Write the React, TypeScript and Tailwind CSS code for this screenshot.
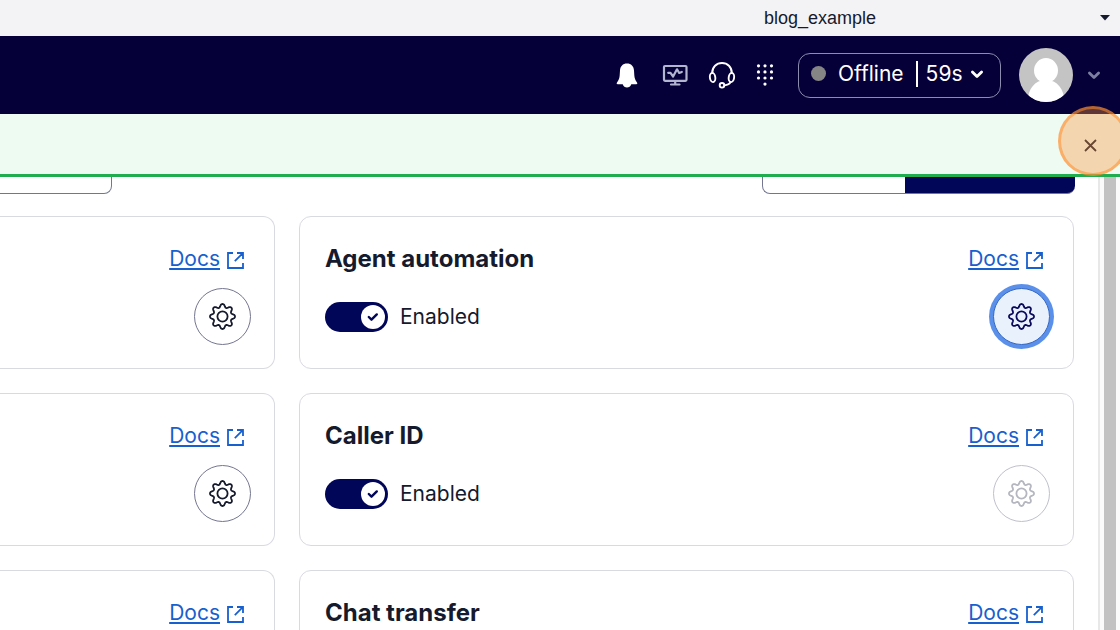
import type { ReactNode } from "react";

type GearState = "default" | "focused" | "disabled";

type Feature = {
  name: string;
  gear?: GearState;
};

const features: Feature[] = [
  { name: "Agent automation", gear: "focused" },
  { name: "Caller ID", gear: "disabled" },
  { name: "Chat transfer" },
];

const gearStyles: Record<GearState, string> = {
  default: "border-[#747690] bg-white text-[#151a2d]",
  focused: "border-[#3568c4] bg-[#e9f1fd] text-[#0a0a5c] ring-4 ring-[#5a90ea]",
  disabled: "border-[#bfc0cc] bg-white text-[#b4b6c0]",
};

function BellIcon() {
  return (
    <svg width="22" height="25" viewBox="0 0 22 25" fill="currentColor" aria-hidden="true">
      <path d="M11 .5C6.800.5 4.300 3.200 4 7.500l-.3 4.800c-.2 2.900-.9 4.800-2.700 7.200-.7 1-.3 1.700.7 1.700h5C7.500 23.300 9 24.500 11 24.500s3.500-1.200 4.300-3.300h5c1 0 1.400-.7.7-1.700-1.800-2.400-2.500-4.300-2.700-7.200L18 7.500C17.700 3.200 15.200.5 11 .5Z" />
    </svg>
  );
}

function MonitorIcon() {
  return (
    <svg width="26" height="24" viewBox="0 0 26 24" fill="none" stroke="currentColor" strokeWidth="2.200" strokeLinejoin="round" strokeLinecap="round" aria-hidden="true">
      <rect x="2" y="3" width="22.500" height="14.800" rx="1" />
      <path d="M13.200 18v3M9 21.500h8.500" />
      <path d="M6.200 9.800h2.300l2.600 3.700L15 6.300l2.200 3.700 2.600-1" />
    </svg>
  );
}

function HeadsetIcon() {
  return (
    <svg width="28" height="28" viewBox="0 0 28 28" fill="none" stroke="currentColor" strokeWidth="1.900" strokeLinecap="round" aria-hidden="true">
      <path d="M4.200 12C4.200 6 8.500 2 14 2s9.800 4 9.800 10" />
      <ellipse cx="4.600" cy="16.500" rx="2.700" ry="4.600" transform="rotate(-8 4.600 16.500)" />
      <ellipse cx="23.400" cy="16.500" rx="2.700" ry="4.600" transform="rotate(8 23.400 16.500)" />
      <path d="M22.500 21.200c-.8 1.800-2.900 2.900-6.100 3.200" />
      <circle cx="14" cy="24.300" r="2.300" />
    </svg>
  );
}

function DialpadIcon() {
  return (
    <svg width="18" height="24" viewBox="0 0 18 24" fill="currentColor" aria-hidden="true">
      {[2.8, 8.9, 15].map((y) =>
        [2.5, 9, 15.5].map((x) => <circle key={`${x}-${y}`} cx={x} cy={y} r="1.600" />)
      )}
      <circle cx="9" cy="21.100" r="1.600" />
    </svg>
  );
}

function ChevronIcon() {
  return (
    <svg width="14" height="10" viewBox="0 0 14 10" fill="none" stroke="currentColor" strokeWidth="2.800" strokeLinecap="round" strokeLinejoin="round" aria-hidden="true">
      <path d="M2.400 2.900 7 7.500l4.600-4.600" />
    </svg>
  );
}

function ExternalIcon() {
  return (
    <svg width="17" height="17" viewBox="0 0 17 17" fill="none" stroke="currentColor" strokeWidth="1.800" className="mt-0.5" aria-hidden="true">
      <path d="M6 1H1v15h15v-5M10 1h6v6M15.800 1.200 7.800 9.200" />
    </svg>
  );
}

function GearIcon() {
  // eight rounded teeth, one every 45 degrees
  const points = Array.from({ length: 160 }, (_, i) => {
    const a = (i / 160) * Math.PI * 2;
    const c = Math.cos(8 * a);
    const r = 10.9 + 1.6 * (1.25 * c - 0.25 * c * c * c);
    return `${(13.5 + r * Math.cos(a)).toFixed(2)} ${(13.5 + r * Math.sin(a)).toFixed(2)}`;
  });
  return (
    <svg width="27" height="27" viewBox="0 0 27 27" fill="none" stroke="currentColor" strokeWidth="1.800" strokeLinejoin="round" aria-hidden="true">
      <path d={`M${points.join("L")}Z`} />
      <circle cx="13.500" cy="13.500" r="5.100" />
    </svg>
  );
}

function DocsLink() {
  return (
    <a href="#docs" className="mr-[7px] flex items-center gap-[7px] text-[21px] leading-9 text-[#1760ce]">
      <span className="underline decoration-2 underline-offset-2">Docs</span>
      <ExternalIcon />
    </a>
  );
}

function GearButton({ label, state = "default" }: { label: string; state?: GearState }) {
  return (
    <button
      type="button"
      aria-label={label}
      disabled={state === "disabled"}
      className={`flex size-[57px] items-center justify-center rounded-full border ${gearStyles[state]}`}
    >
      <GearIcon />
    </button>
  );
}

function Toggle({ name }: { name: string }) {
  return (
    <label className="relative flex items-center gap-3 text-[21px] text-[#151a2d]">
      <input type="checkbox" role="switch" defaultChecked aria-label={`${name} enabled`} className="sr-only" />
      <span className="flex h-[30px] w-[63px] items-center justify-end rounded-full bg-[#020659] pr-[3px]">
        <span className="flex size-6 items-center justify-center rounded-full bg-white text-[#020659]">
          <svg width="12" height="10" viewBox="0 0 12 10" fill="none" stroke="currentColor" strokeWidth="2.400" strokeLinecap="round" strokeLinejoin="round" aria-hidden="true">
            <path d="m1.800 5 2.700 2.700 5.300-5.300" />
          </svg>
        </span>
      </span>
      Enabled
    </label>
  );
}

function Card({ className, children }: { className: string; children: ReactNode }) {
  return (
    <section className={`min-h-[153px] border border-[#d9dae1] bg-white pt-6 pb-[23px] pr-[23px] ${className}`}>
      {children}
    </section>
  );
}

export default function App() {
  return (
    <div className="flex h-screen flex-col overflow-hidden bg-white font-[Inter,sans-serif]">
      <div className="flex h-9 shrink-0 items-center justify-end bg-[#f3f3f6] pr-[10px] text-[#151a2d]">
        <button type="button" className="flex items-center gap-56 font-['Liberation_Sans',Arial,sans-serif] text-[18px]">
          blog_example
          <svg width="10" height="6" viewBox="0 0 10 6" fill="currentColor" aria-hidden="true">
            <path d="M0 0h10L5 5.500Z" />
          </svg>
        </button>
      </div>

      <header className="flex h-[78px] shrink-0 items-center justify-end bg-[#050038] pr-[19px] text-white">
        <nav className="mr-6 flex items-center gap-5" aria-label="Tools">
          <button type="button" aria-label="Notifications" className="mr-1">
            <BellIcon />
          </button>
          <button type="button" aria-label="Monitoring" className="text-[#b3b6d0]">
            <MonitorIcon />
          </button>
          <button type="button" aria-label="Support">
            <HeadsetIcon />
          </button>
          <button type="button" aria-label="Dialpad">
            <DialpadIcon />
          </button>
        </nav>
        <button type="button" className="flex h-[45px] w-[203px] items-center rounded-xl border border-[#8b8caf] pb-[3px] pl-3 text-[21px]">
          <span className="mr-3 size-[15px] rounded-full bg-[#858585]" />
          Offline
          <span className="mr-2 ml-3 h-[26px] w-[2px] bg-white" />
          <span className="mr-2">59s</span>
          <ChevronIcon />
        </button>
        <button type="button" aria-label="Account" className="ml-[18px] flex items-center gap-[14px] text-[#7d7f9f]">
          <svg width="54" height="54" viewBox="0 0 54 54" aria-hidden="true">
            <clipPath id="avatar">
              <circle cx="27" cy="27" r="27" />
            </clipPath>
            <g clipPath="url(#avatar)">
              <rect width="54" height="54" fill="#c4c4c4" />
              <ellipse cx="27" cy="22.500" rx="12" ry="12.500" fill="#fff" />
              <path d="M8.500 54c.5-13 7-22 18.500-22s18 9 18.500 22Z" fill="#fff" />
            </g>
          </svg>
          <ChevronIcon />
        </button>
      </header>

      <div role="status" className="relative z-10 flex h-[63px] shrink-0 items-center justify-end border-b-3 border-[#1fad50] bg-[#edfbf2] pt-0.5 pr-[23px]">
        <button type="button" aria-label="Close" className="text-[#151a2d]">
          <svg width="13" height="13" viewBox="0 0 13 13" fill="none" stroke="currentColor" strokeWidth="1.800" aria-hidden="true">
            <path d="m1 1 11 11M12 1 1 12" />
          </svg>
        </button>
        <span className="pointer-events-none absolute -top-2 -right-2 size-[70px] rounded-full border-3 border-[#ff8c2c]/55 bg-[#ff973a]/36" />
      </div>

      <main className="flex min-h-0 flex-1">
        <div className="min-w-0 flex-1 overflow-hidden pr-6">
          <div className="-mr-px flex h-[17px] items-end justify-between overflow-hidden">
            <input type="search" aria-label="Search features" className="h-12 w-28 rounded-r-lg border border-l-0 border-[#747690]" />
            <div className="flex">
              <button type="button" aria-label="List view" className="h-12 w-[143px] rounded-l-lg border border-r-0 border-[#747690]" />
              <button type="button" aria-label="Grid view" className="h-12 w-[170px] rounded-r-lg border-b border-[#747690] bg-[#020659]" />
            </div>
          </div>

          <div className="mt-[22px] flex flex-col gap-6">
            {features.map((feature) => (
              <div key={feature.name} className="grid grid-cols-[275px_1fr] gap-6">
                <Card className="rounded-r-xl border-l-0">
                  <div className="flex justify-end">
                    <DocsLink />
                  </div>
                  {feature.gear && (
                    <div className="mt-[11px] flex justify-end">
                      <GearButton label="Settings" />
                    </div>
                  )}
                </Card>
                <Card className="rounded-xl pl-[25px]">
                  <div className="flex items-center justify-between">
                    <h2 className="text-[24px] leading-9 font-bold text-[#151a2d]">{feature.name}</h2>
                    <DocsLink />
                  </div>
                  {feature.gear && (
                    <div className="mt-[11px] flex items-center justify-between">
                      <Toggle name={feature.name} />
                      <GearButton label={`${feature.name} settings`} state={feature.gear} />
                    </div>
                  )}
                </Card>
              </div>
            ))}
          </div>
        </div>
        <div className="flex w-[22px] shrink-0 border-l-2 border-[#e8e8e8] bg-[#fafafa] pl-1">
          <div className="w-3 bg-[#c1c1c1]" />
        </div>
      </main>
    </div>
  );
}
